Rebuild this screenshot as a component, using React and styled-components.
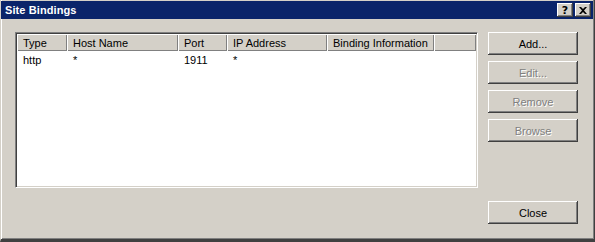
import React from "react";
import styled, { createGlobalStyle } from "styled-components";

const GlobalStyle = createGlobalStyle`
  html, body {
    margin: 0;
    padding: 0;
    background: #d4d0c8;
  }
  body {
    font-family: Tahoma, "Liberation Sans", Arial, sans-serif;
    font-size: 11px;
    color: #000;
  }
`;

const Window = styled.div`
  width: 595px;
  height: 242px;
  box-sizing: border-box;
  background: #d4d0c8;
  border-left: 1px solid #d4d0c8;
  border-right: 1px solid #404040;
  border-bottom: 3px solid #404040;
  box-shadow: inset 1px 0 #fff, inset -1px -1px #808080;
  display: flex;
  flex-direction: column;
  padding: 1px 1px 0 0;
`;

const TitleBar = styled.div`
  height: 18px;
  background: #0a246a;
  display: flex;
  align-items: center;
  padding: 0 2px 0 4px;
`;

const Title = styled.div`
  flex: 1;
  color: #fff;
  font-weight: bold;
  font-size: 11px;
  letter-spacing: 0.1px;
`;

const CaptionButton = styled.button`
  width: 16px;
  height: 14px;
  margin-left: 2px;
  padding: 0;
  box-sizing: border-box;
  background: #d4d0c8;
  border: none;
  box-shadow: inset -1px -1px #404040, inset 1px 1px #fff, inset -2px -2px #808080;
  display: flex;
  align-items: center;
  justify-content: center;
  font-family: "DejaVu Sans", sans-serif;
  font-weight: bold;
  font-size: 11px;
  line-height: 1;
  color: #000;
`;

const Body = styled.div`
  flex: 1;
  display: flex;
  gap: 10px;
  padding: 13px 14px 15px 14px;
`;

const ListView = styled.div`
  width: 463px;
  height: 156px;
  box-sizing: border-box;
  background: #fff;
  border: 1px solid;
  border-color: #808080 #fff #fff #808080;
  box-shadow: inset 1px 1px #404040, inset -1px -1px #d4d0c8;
  padding: 1px;
  display: flex;
  flex-direction: column;
`;

const columns = "50px 111px 49px 100px 107px 1fr";

const HeaderRow = styled.div`
  display: grid;
  grid-template-columns: ${columns};
  height: 17px;
`;

const HeaderCell = styled.div`
  background: #d4d0c8;
  box-shadow: inset 1px 1px #fff, inset -1px -1px #808080;
  padding: 0 0 0 6px;
  display: flex;
  align-items: center;
  white-space: nowrap;
  overflow: hidden;
`;

const Row = styled.div`
  display: grid;
  grid-template-columns: ${columns};
  height: 17px;
  align-items: center;
`;

const Cell = styled.div`
  padding-left: 6px;
  white-space: nowrap;
`;

const ButtonColumn = styled.div`
  display: flex;
  flex-direction: column;
  gap: 6px;
`;

const Button = styled.button`
  width: 90px;
  height: 23px;
  box-sizing: border-box;
  padding: 0;
  background: #d4d0c8;
  border: none;
  box-shadow: inset -1px -1px #404040, inset 1px 1px #fff, inset -2px -2px #808080;
  font-family: inherit;
  font-size: 11px;
  color: ${({ disabled }) => (disabled ? "#808080" : "#000")};
  text-shadow: ${({ disabled }) => (disabled ? "1px 1px 0 #fff" : "none")};
  margin-top: ${({ $push }) => ($push ? "auto" : "0")};
`;

const CloseIcon = () => (
  <svg width="8" height="7" viewBox="0 0 8 7">
    <path d="M0 0h2l2 2 2-2h2L5 3.5 8 7H6L4 5 2 7H0l3-3.5z" fill="#000" />
  </svg>
);

const headers = ["Type", "Host Name", "Port", "IP Address", "Binding Information", ""];
const bindings = [{ type: "http", host: "*", port: "1911", ip: "*", info: "" }];

export default function App() {
  return (
    <>
      <GlobalStyle />
      <Window>
        <TitleBar>
          <Title>Site Bindings</Title>
          <CaptionButton>?</CaptionButton>
          <CaptionButton>
            <CloseIcon />
          </CaptionButton>
        </TitleBar>
        <Body>
          <ListView>
            <HeaderRow>
              {headers.map((h, i) => (
                <HeaderCell key={i}>{h}</HeaderCell>
              ))}
            </HeaderRow>
            {bindings.map((b, i) => (
              <Row key={i}>
                <Cell>{b.type}</Cell>
                <Cell>{b.host}</Cell>
                <Cell>{b.port}</Cell>
                <Cell>{b.ip}</Cell>
                <Cell>{b.info}</Cell>
              </Row>
            ))}
          </ListView>
          <ButtonColumn>
            <Button>Add...</Button>
            <Button disabled>Edit...</Button>
            <Button disabled>Remove</Button>
            <Button disabled>Browse</Button>
            <Button $push>Close</Button>
          </ButtonColumn>
        </Body>
      </Window>
    </>
  );
}
